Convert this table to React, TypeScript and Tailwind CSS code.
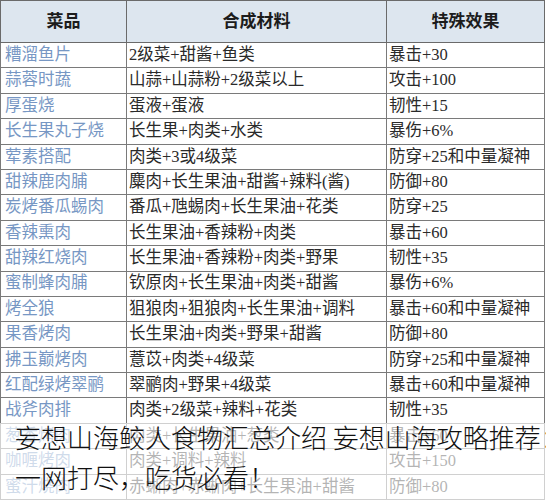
type Dish = {
  name: string;
  materials: string;
  effect: string;
};

const dishes: Dish[] = [
  { name: "糟溜鱼片", materials: "2级菜+甜酱+鱼类", effect: "暴击+30" },
  { name: "蒜蓉时蔬", materials: "山蒜+山蒜粉+2级菜以上", effect: "攻击+100" },
  { name: "厚蛋烧", materials: "蛋液+蛋液", effect: "韧性+15" },
  { name: "长生果丸子烧", materials: "长生果+肉类+水类", effect: "暴伤+6%" },
  { name: "荤素搭配", materials: "肉类+3或4级菜", effect: "防穿+25和中量凝神" },
  { name: "甜辣鹿肉脯", materials: "麋肉+长生果油+甜酱+辣料(酱)", effect: "防御+80" },
  { name: "炭烤番瓜蜴肉", materials: "番瓜+虺蜴肉+长生果油+花类", effect: "防穿+25" },
  { name: "香辣熏肉", materials: "长生果油+香辣粉+肉类", effect: "暴击+60" },
  { name: "甜辣红烧肉", materials: "长生果油+香辣粉+肉类+野果", effect: "韧性+35" },
  { name: "蜜制蜂肉脯", materials: "钦原肉+长生果油+肉类+甜酱", effect: "暴伤+6%" },
  { name: "烤全狼", materials: "狙狼肉+狙狼肉+长生果油+调料", effect: "暴击+60和中量凝神" },
  { name: "果香烤肉", materials: "长生果油+肉类+野果+甜酱", effect: "防御+80" },
  { name: "拂玉巅烤肉", materials: "薏苡+肉类+4级菜", effect: "防穿+25和中量凝神" },
  { name: "红配绿烤翠鹂", materials: "翠鹂肉+野果+4级菜", effect: "暴击+60和中量凝神" },
  { name: "战斧肉排", materials: "肉类+2级菜+辣料+花类", effect: "韧性+35" },
  { name: "葱香烤肉", materials: "肉类+长生果油+葱类", effect: "暴击+60" },
  { name: "咖喱烤肉", materials: "肉类+调料+辣料", effect: "攻击+150" },
  { name: "蜜汁烧肉", materials: "赤蜥肉+赤蜥肉+长生果油+甜酱", effect: "防御+80" },
];

export default function App() {
  return (
    <div className="relative w-[546px] h-[500px] overflow-hidden bg-white font-['Liberation_Serif','Noto_Sans_CJK_SC',serif]">
      <table className="table-fixed border-collapse w-[544px] text-[16.5px] text-[#2a2a2a]">
        <colgroup>
          <col className="w-[126px]" />
          <col className="w-[260px]" />
          <col className="w-[158px]" />
        </colgroup>
        <thead>
          <tr className="h-[42px] bg-[#dde6ef]">
            <th className="border border-[#6a6a6a] font-bold text-[17px] text-[#1c1c1c] text-center">菜品</th>
            <th className="border border-[#6a6a6a] font-bold text-[17px] text-[#1c1c1c] text-center">合成材料</th>
            <th className="border border-[#6a6a6a] font-bold text-[17px] text-[#1c1c1c] text-center">特殊效果</th>
          </tr>
        </thead>
        <tbody>
          {dishes.map((d) => (
            <tr key={d.name} className="h-[25.4px] leading-none">
              <td className="border border-[#7a7a7a] pl-[4px] whitespace-nowrap text-[#7797c4]">{d.name}</td>
              <td className="border border-[#7a7a7a] pl-[2px] whitespace-nowrap">{d.materials}</td>
              <td className="border border-[#7a7a7a] pl-[2px] whitespace-nowrap">{d.effect}</td>
            </tr>
          ))}
        </tbody>
      </table>

      {/* caption strip laid over the last rows */}
      <div className="absolute left-0 right-0 top-[423px] bottom-0 bg-white/65" />
      <div className="absolute left-[15px] top-[417px] whitespace-nowrap text-[26px] font-light leading-[40px] text-[#111] font-['Noto_Sans_CJK_SC',sans-serif]">
        妄想山海鲛人食物汇总介绍 妄想山海攻略推荐：
        <br />
        一网打尽，吃货必看！
      </div>
    </div>
  );
}
